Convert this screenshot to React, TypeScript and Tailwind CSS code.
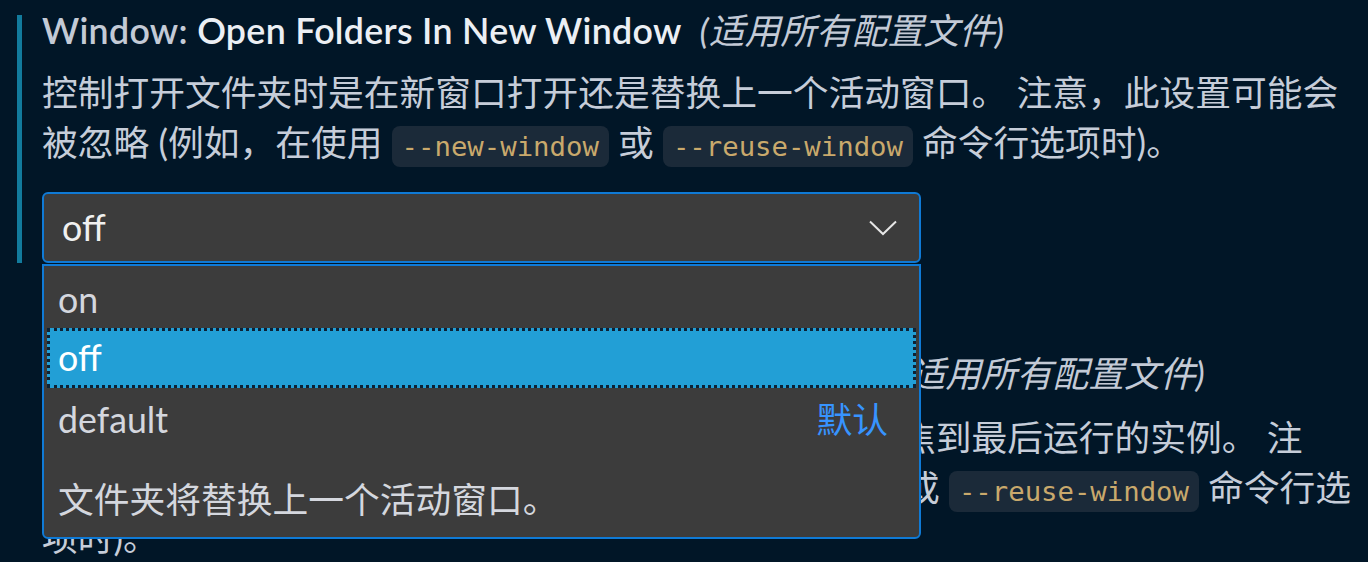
import React from "react";

function Code({ children }: { children: string }) {
  return (
    <code className="inline-block h-[41px] rounded-[8px] bg-[#1b2a39] px-[10px] align-middle font-['DejaVu_Sans_Mono',monospace] text-[27.3px] leading-[41px] text-[#c9a96c]">
      {children}
    </code>
  );
}

function Title({ label }: { label: string }) {
  return (
    <div className="h-[36px] whitespace-nowrap leading-[32px] tracking-[0.3px]">
      <span className="font-semibold text-[#c3cad6]">Window: </span>
      <span className="font-semibold text-[#eceff4]">{label}</span>
      <span className="ml-[18px] italic tracking-normal text-[#c3cad6]">(适用所有配置文件)</span>
    </div>
  );
}

export default function App() {
  return (
    <div className="relative h-[562px] w-[1368px] overflow-hidden bg-[#011627] font-[Lato,'Noto_Sans_CJK_SC',sans-serif] text-[35.75px]">
      <div className="pt-[15px]">
        {/* focused setting */}
        <div className="ml-[17px] border-l-[5px] border-[#127b9d] pl-[20px]">
          <Title label="Open Folders In New Window" />
          <div className="mt-[17px] whitespace-nowrap leading-[50px] text-[#c6cdd9]">
            控制打开文件夹时是在新窗口打开还是替换上一个活动窗口。 注意，此设置可能会
            <br />
            被忽略 (例如，在使用 <Code>--new-window</Code> 或 <Code>--reuse-window</Code> 命令行选项时)。
          </div>
          <div className="mt-[24px] flex h-[71px] w-[879px] items-center justify-between rounded-[6px] border-2 border-[#0f7ad6] bg-[#3c3c3c] pl-[18px] pr-[22px]">
            <span className="text-[#f0f0f0]">off</span>
            <svg width="28" height="16" viewBox="0 0 28 16" fill="none">
              <polyline points="1,1.5 14,14 27,1.5" stroke="#e6e6e6" strokeWidth="2" />
            </svg>
          </div>
        </div>

        {/* next setting, partly under the open list */}
        <div className="mt-[95px] pl-[42px]">
          <Title label="Open Without Arguments In New Window" />
          <div className="mt-[19px] whitespace-nowrap leading-[50px] text-[#c6cdd9]">
            控制在另一个实例无参数启动时打开新的空窗口还是聚焦到最后运行的实例。 注
            <br />
            意，此设置可能会被忽略 (例如，在使用 <Code>--new-window</Code> 或 <Code>--reuse-window</Code> 命令行选
            <br />
            项时)。
          </div>
        </div>
      </div>

      {/* open select list */}
      <div className="absolute left-[42px] top-[264px] h-[275px] w-[879px] rounded-b-[6px] border-2 border-[#0f7ad6] bg-[#3c3c3c] px-[3px] pt-[2px] text-[#d4d7de]">
        <div className="flex h-[60px] items-center pl-[11px] pt-[3px]">on</div>
        <div className="flex h-[60px] items-center border-[3px] border-dotted border-[#0c2236] bg-[#229fd6] pl-[8px] text-white">
          off
        </div>
        <div className="flex h-[60px] items-center justify-between pl-[11px] pr-[28px] pt-[4px]">
          <span>default</span>
          <span className="text-[#3794ff]">默认</span>
        </div>
        <div className="mt-[27px] pl-[11px] leading-[50px]">文件夹将替换上一个活动窗口。</div>
      </div>
    </div>
  );
}
